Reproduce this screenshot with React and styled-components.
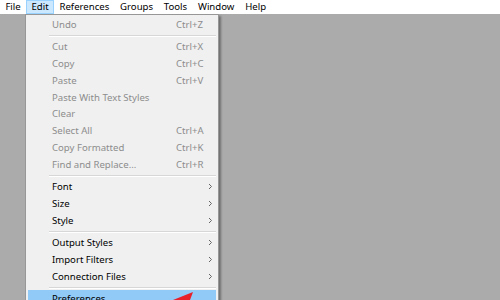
import React from "react";
import styled, { createGlobalStyle } from "styled-components";

const Global = createGlobalStyle`
  html, body { margin: 0; padding: 0; }
  body {
    background: #ababab;
    font-family: "Noto Sans", "Open Sans", sans-serif;
    font-size: 9.6px;
    overflow: hidden;
  }
`;

const Page = styled.div`
  width: 500px;
  height: 300px;
  display: flex;
  flex-direction: column;
  position: relative;
  overflow: hidden;
`;

const MenuBar = styled.div`
  height: 14px;
  background: #ffffff;
  display: flex;
  align-items: stretch;
  flex-shrink: 0;
`;

const BarItem = styled.div`
  padding: 0 4.4px;
  border: 1px solid ${(p) => (p.$active ? "#99d1ff" : "transparent")};
  background: ${(p) => (p.$active ? "#cce8ff" : "transparent")};
  color: #000;
  line-height: 12px;
  font-size: 9.6px;
  white-space: nowrap;
`;

const Workspace = styled.div`
  flex: 1;
  background: #ababab;
  position: relative;
`;

const Dropdown = styled.div`
  position: absolute;
  left: 25px;
  top: 0;
  width: 188px;
  background: #f0f0f0;
  border: 1px solid #979797;
  padding: 1px 2px;
  box-shadow: 2px 2px 2px rgba(0, 0, 0, 0.35);
  display: flex;
  flex-direction: column;
`;

const Row = styled.div`
  height: 16.8px;
  display: grid;
  grid-template-columns: 24px 124px 30px 10px;
  align-items: center;
  color: ${(p) => (p.$disabled ? "#8d8d8d" : "#000")};
  background: ${(p) => (p.$hover ? "#91c9f7" : "transparent")};
  font-size: 9.6px;
  white-space: nowrap;
`;

const Label = styled.span`
  grid-column: 2;
`;

const Shortcut = styled.span`
  grid-column: 3;
  color: #8d8d8d;
`;

const Arrow = styled.span`
  grid-column: 4;
  display: flex;
  align-items: center;
  padding-left: 2px;
`;

const Separator = styled.div`
  height: 1px;
  margin: 2.2px 0 1.4px 21px;
  background: #d7d7d7;
  border-bottom: 1px solid #ffffff;
`;

const Annotation = styled.svg`
  position: absolute;
  left: 160px;
  top: 280px;
`;

const Chevron = () => (
  <svg width="5" height="7" viewBox="0 0 5 7">
    <path d="M1 1 L3.5 3.5 L1 6" fill="none" stroke="#666" strokeWidth="1" />
  </svg>
);

const items = [
  { label: "Undo", sc: "Ctrl+Z", dis: true },
  "sep",
  { label: "Cut", sc: "Ctrl+X", dis: true },
  { label: "Copy", sc: "Ctrl+C", dis: true },
  { label: "Paste", sc: "Ctrl+V", dis: true },
  { label: "Paste With Text Styles", dis: true },
  { label: "Clear", dis: true },
  { label: "Select All", sc: "Ctrl+A", dis: true },
  { label: "Copy Formatted", sc: "Ctrl+K", dis: true },
  { label: "Find and Replace...", sc: "Ctrl+R", dis: true },
  "sep",
  { label: "Font", sub: true },
  { label: "Size", sub: true },
  { label: "Style", sub: true },
  "sep",
  { label: "Output Styles", sub: true },
  { label: "Import Filters", sub: true },
  { label: "Connection Files", sub: true },
  "sep",
  { label: "Preferences...", hover: true },
];

const bar = ["File", "Edit", "References", "Groups", "Tools", "Window", "Help"];

export default function App() {
  return (
    <Page>
      <Global />
      <MenuBar>
        {bar.map((b) => (
          <BarItem key={b} $active={b === "Edit"}>
            {b}
          </BarItem>
        ))}
      </MenuBar>
      <Workspace>
        <Dropdown>
          {items.map((it, i) =>
            it === "sep" ? (
              <Separator key={i} />
            ) : (
              <Row key={i} $disabled={it.dis} $hover={it.hover}>
                <Label>{it.label}</Label>
                {it.sc && <Shortcut>{it.sc}</Shortcut>}
                {it.sub && (
                  <Arrow>
                    <Chevron />
                  </Arrow>
                )}
              </Row>
            )
          )}
        </Dropdown>
      </Workspace>
      <Annotation width="60" height="20" viewBox="0 0 60 20">
        <polygon points="13,20 33,12 30,20" fill="#e8202a" />
      </Annotation>
    </Page>
  );
}
